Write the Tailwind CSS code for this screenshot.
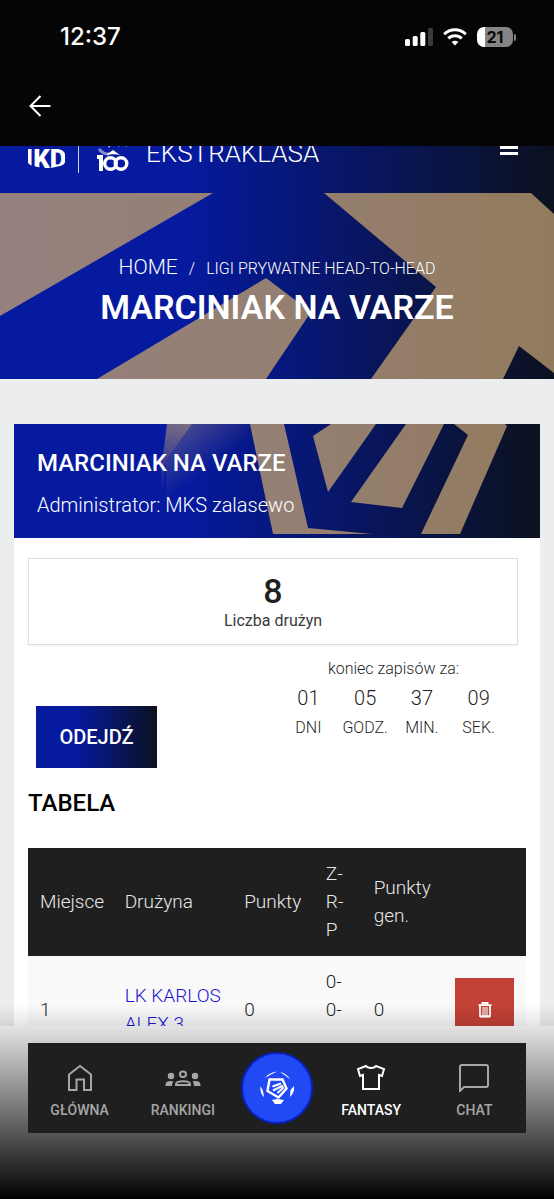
<!DOCTYPE html>
<html lang="pl">
<head>
<meta charset="utf-8">
<meta name="viewport" content="width=device-width, initial-scale=1">
<title>Marciniak na Varze</title>
<script src="https://cdn.jsdelivr.net/npm/@tailwindcss/browser@4"></script>
</head>
<body class="flex h-screen flex-col overflow-hidden bg-[#ecedef] font-['Roboto',sans-serif] font-light text-[#1f1f1f]">

<header class="shrink-0 bg-[#050505] text-white">
  <div class="flex h-[74px] items-center justify-between pr-[38px] pl-[60px]">
    <time class="font-['Inter',sans-serif] text-[24px] font-medium">12:37</time>
    <div class="flex items-center gap-[10px]">
      <svg class="h-[18px] w-[28px]" viewBox="0 0 28 18" fill="#fff" aria-hidden="true"><rect x="0" y="11" width="5" height="7" rx="1.5"/><rect x="7.700" y="8" width="5" height="10" rx="1.500"/><rect x="15.300" y="4" width="5" height="14" rx="1.500"/><rect x="23" y="0" width="5" height="18" rx="1.500" fill="#3a3a3a"/></svg>
      <svg class="h-[18px] w-[24px]" viewBox="0 0 24 18" fill="none" stroke="#fff" stroke-width="3" aria-hidden="true"><path d="M1.200 6.200C7.200.2 16.800.2 22.800 6.200"/><path d="M5.300 10.400c3.800-3.700 9.600-3.700 13.400 0"/><path d="M8.600 14c2-1.800 4.800-1.800 6.800 0L12 17.600z" fill="#fff" stroke="none"/></svg>
      <div class="flex items-center">
        <div class="flex h-[20px] w-[36px] items-center justify-center rounded-[7px] bg-linear-to-r from-white from-23% to-[#858585] to-23% font-['Inter',sans-serif] text-[16px] font-bold text-[#0a0a0a]">21</div>
        <div class="ml-px h-[7px] w-[2px] rounded-r-full bg-[#858585]"></div>
      </div>
    </div>
  </div>
  <div class="flex h-[72px] items-start px-[28px] pt-[20px]">
    <button type="button" aria-label="Wstecz"><svg class="size-[24px]" viewBox="0 0 24 24" fill="none" stroke="#fff" stroke-width="2"><path d="M22.500 12H2.500M12.500 2 2.500 12l10 10"/></svg></button>
  </div>
</header>

<main class="min-h-0 flex-1 overflow-hidden">
  <div class="-mt-[37px] flex h-[84px] items-center bg-linear-to-r/srgb from-[#051a9f] from-33% to-[#0b111e] pr-[36px] pl-[28px] text-white">
    <svg class="h-[40px] w-[37px]" viewBox="0 0 37 40" role="img" aria-label="IKD"><defs><clipPath id="shield"><path d="M0 0h37v31c0 4-7 4-18 7C7 35 0 35 0 31z"/></clipPath></defs><text x="18" y="37" text-anchor="middle" font-family="Roboto" font-weight="900" font-size="26" fill="#fff" clip-path="url(#shield)">IKD</text></svg>
    <div class="ml-[13px] h-[44px] w-px bg-white/80"></div>
    <svg class="ml-[16px] h-[44px] w-[36px]" viewBox="0 0 36 44" role="img" aria-label="100">
      <path d="M2 13h4l3 4zM12 13h5l-3 6zM20 13h5l-1 5zM30 13h5l-4 5z" fill="#fff"/><path d="M4 20c4 5 7 5 10 5" fill="none" stroke="#fff" stroke-opacity=".5" stroke-width="3"/><path d="M18 21l7 5c-4-1-9-1-14 0z" fill="#fff"/>
      <path d="M2 28h4v14" fill="none" stroke="#fff" stroke-width="4"/><circle cx="15.500" cy="34.500" r="5.800" fill="none" stroke="#fff" stroke-width="3.400"/><circle cx="26" cy="34.500" r="5.800" fill="none" stroke="#fff" stroke-width="3.400"/>
    </svg>
    <a href="#" class="ml-[15px] pt-[4px] text-[26px] leading-[30px]">EKSTRAKLASA</a>
    <button type="button" class="mb-[6px] ml-auto" aria-label="Menu"><svg class="h-[16px] w-[18px]" viewBox="0 0 18 16" fill="#fff"><rect y="0" width="18" height="3"/><rect y="6" width="18" height="3"/><rect y="12" width="18" height="3"/></svg></button>
  </div>

  <section class="relative flex h-[186px] flex-col items-center overflow-hidden bg-linear-to-r/srgb from-[#051a9f] from-33% to-[#0b111e] pt-[58px] text-white">
    <svg class="absolute inset-0 size-full" viewBox="0 0 554 186" preserveAspectRatio="xMidYMid slice" aria-hidden="true">
      <defs><linearGradient id="tan" gradientUnits="userSpaceOnUse" x1="0" x2="554" y1="0" y2="0"><stop stop-color="#95807e"/><stop offset=".4" stop-color="#958076"/><stop offset="1" stop-color="#927b5d"/></linearGradient></defs>
      <g fill="url(#tan)"><path d="M0 0h213L0 123z"/><path d="M97 186 266 85l45 34-45 67z"/><path d="M324 0h207l23 21v159l-35-27-16 33H371l65-92z"/></g>
    </svg>
    <nav class="relative flex items-baseline" aria-label="Okruszki">
      <a href="#" class="text-[21px] leading-[32px]">HOME</a>
      <span class="mx-[11px] text-[16px]">/</span>
      <span class="text-[16px]">LIGI PRYWATNE HEAD-TO-HEAD</span>
    </nav>
    <h1 class="relative mt-[2px] text-[34px] leading-[44px] font-semibold">MARCINIAK NA VARZE</h1>
  </section>

  <article class="mx-[14px] mt-[45px] bg-white">
    <div class="relative h-[114px] overflow-hidden bg-linear-to-r/srgb from-[#051a9f] from-33% to-[#0b111e] px-[23px] pt-[24px] text-white">
      <svg class="absolute inset-0 size-full" viewBox="0 0 526 114" preserveAspectRatio="xMidYMid slice" aria-hidden="true">
        <defs>
          <linearGradient id="tan2" gradientUnits="userSpaceOnUse" x1="230" x2="500" y1="0" y2="0"><stop stop-color="#958078"/><stop offset="1" stop-color="#927b5f"/></linearGradient>
          <linearGradient id="fade1" gradientUnits="userSpaceOnUse" x1="168" y1="0" x2="150" y2="70"><stop stop-color="#95807c" stop-opacity=".8"/><stop offset="1" stop-color="#95807c" stop-opacity="0"/></linearGradient>
          <linearGradient id="fade2" gradientUnits="userSpaceOnUse" x1="182" y1="0" x2="208" y2="34"><stop stop-color="#95807c" stop-opacity=".4"/><stop offset="1" stop-color="#95807c" stop-opacity="0"/></linearGradient>
        </defs>
        <path d="M153 0h25l-26 36-4 34-1-24z" fill="url(#fade1)"/><path d="M178 0h58l8 45-92 30V36z" fill="url(#fade2)"/>
        <g fill="url(#tan2)"><path d="M236 0h34l24 104 64 6h-99z"/><path d="M317 0h45l-48 68-15-56z"/><path d="M392 0h38l-42 84-51-6z"/><path d="M440 0h51l2 2-47 108h-39l47-99z"/></g>
      </svg>
      <h2 class="relative text-[24px] leading-[30px] font-medium">MARCINIAK NA VARZE</h2>
      <p class="relative mt-[13px] text-[20px] leading-[28px]">Administrator: MKS zalasewo</p>
    </div>

    <div class="px-[14px] pt-[20px]">
      <div class="mr-[8px] flex h-[87px] flex-col items-center border border-[#dedede] pt-[14px] shadow-xs">
        <strong class="text-[34px] leading-[36px] font-medium">8</strong>
        <span class="text-[16px] leading-[24px] font-normal text-[#3a3a3a]">Liczba drużyn</span>
      </div>
      <div class="flex justify-between pt-[12px] pr-[19px] pl-[8px]">
        <button type="button" class="mt-[49px] h-[62px] w-[121px] bg-linear-to-r/srgb from-[#051a9f] from-33% to-[#0b111e] text-[20px] font-medium text-white">ODEJDŹ</button>
        <div class="w-[227px] text-center">
          <p class="text-[16px] leading-[24px]">koniec zapisów za:</p>
          <dl class="mt-[2px] grid grid-cols-4">
            <div class="flex flex-col-reverse"><dt class="text-[16px] leading-[30px]">DNI</dt><dd class="text-[20px] leading-[30px]">01</dd></div>
            <div class="flex flex-col-reverse"><dt class="text-[16px] leading-[30px]">GODZ.</dt><dd class="text-[20px] leading-[30px]">05</dd></div>
            <div class="flex flex-col-reverse"><dt class="text-[16px] leading-[30px]">MIN.</dt><dd class="text-[20px] leading-[30px]">37</dd></div>
            <div class="flex flex-col-reverse"><dt class="text-[16px] leading-[30px]">SEK.</dt><dd class="text-[20px] leading-[30px]">09</dd></div>
          </dl>
        </div>
      </div>
      <h3 class="mt-[20px] text-[24px] leading-[30px] font-medium text-black">TABELA</h3>
      <table class="mt-[30px] w-full table-fixed text-left text-[19px] leading-[28px]">
        <colgroup><col class="w-[17%]"><col class="w-[24%]"><col class="w-[17%]"><col class="w-[9%]"><col class="w-[17%]"><col class="w-[16%]"></colgroup>
        <thead class="bg-[#1f1f1f] text-[#e8e8e8]">
          <tr>
            <th class="py-[12px] pl-[12px] font-light">Miejsce</th><th class="py-[12px] pl-[12px] font-light">Drużyna</th><th class="py-[12px] pl-[12px] font-light">Punkty</th><th class="py-[12px] pl-[9px] font-light">Z-<br>R-<br>P</th><th class="py-[12px] pl-[12px] font-light">Punkty<br>gen.</th><td></td>
          </tr>
        </thead>
        <tbody class="bg-[#f9f9f9]">
          <tr>
            <td class="py-[12px] pl-[12px]">1</td><td class="py-[12px] pl-[12px]"><a href="#" class="text-[#1d12d8]">LK KARLOS<br>ALEX 3</a></td><td class="py-[12px] pl-[12px]">0</td><td class="py-[12px] pl-[9px]">0-<br>0-<br>0</td><td class="py-[12px] pl-[12px]">0</td>
            <td class="pr-[12px] text-right"><button type="button" aria-label="Usuń" class="inline-flex h-[64px] w-[59px] items-center justify-center bg-[#c24036] align-middle"><svg class="h-[16px] w-[14px]" viewBox="0 0 14 16" fill="none" stroke="#fff"><path d="M.5 3.200h13M4.500 2.500V1h5v1.500" stroke-width="1.800"/><path d="M2 4v10.200h10V4" stroke-width="1.800"/><path d="M5 5v8M7 5v8M9 5v8" stroke-width="1.100"/><path d="M2 14.500h10" stroke-width="2.200"/></svg></button></td>
          </tr>
        </tbody>
      </table>
    </div>
  </article>
</main>

<footer class="relative shrink-0 bg-white px-[28px] pt-[17px] pb-[66px]">
  <div class="absolute inset-x-0 -top-[21px] bottom-0 bg-linear-to-b from-transparent to-black"></div>
  <nav class="relative grid h-[90px] grid-cols-[1fr_1fr_85px_1fr_1fr] items-center bg-[#1f1f1f] text-center text-[14px] leading-[20px] font-medium text-[#a6a6a6]" aria-label="Główna nawigacja">
    <a href="#" class="flex flex-col items-center gap-[8px] pt-[8px]">
      <svg class="h-[28px] w-[26px]" viewBox="0 0 26 28" fill="none" stroke="currentColor" stroke-width="2"><path d="M2 10.500 13 2l11 8.500V26h-7V15.500H9.500V26H2z"/></svg>
      GŁÓWNA</a>
    <a href="#" class="flex flex-col items-center gap-[8px] pt-[8px]">
      <svg class="h-[28px] w-[36px]" viewBox="0 0 36 28" fill="currentColor"><circle cx="6" cy="12" r="3.200"/><path d="M.5 22v-1.500c0-2.500 3-3.700 6.500-3.300 1 .1 1.500.3 1.500.3C7.500 18.500 7 20 7 22z"/><circle cx="30" cy="12" r="3.200"/><path d="M35.500 22v-1.500c0-2.500-3-3.700-6.500-3.300-1 .1-1.500.3-1.500.3 1 1 1.500 2.500 1.500 4.500z"/><g fill="none" stroke="currentColor" stroke-width="2"><rect x="15" y="7.500" width="6" height="5.500" rx="2.800"/><path d="M11 21v-.8c0-2 3.500-3 7-3s7 1 7 3v.8z"/></g></svg>
      RANKINGI</a>
    <a href="#" aria-label="Ekstraklasa" class="mx-auto flex size-[72px] items-center justify-center rounded-full border-2 border-[#0a20c4] bg-[#2149f4]">
      <svg class="size-[38px]" viewBox="0 0 38 38" fill="none" stroke="#fff"><path d="M11.500 10.500h13l4 9-8 9-11-6.500z" stroke-width="2.400"/><path d="m14.500 17.500 8.500-3M15 21.500l9-4.500 1 2-5.500 5" stroke-width="2"/><path d="M7 9c3-4 7-6 12-6.500L12 6zM22 3c5 1 8 3.500 10 7.500L28 7zM2.500 17C2 22 3.500 26 6 28l-1-6zM36 17c.5 5-1 8-4 11l.5-7zM14 31l5-1 7 1-3 4h-6z" fill="#fff" stroke="none"/></svg>
    </a>
    <a href="#" class="flex flex-col items-center gap-[8px] pt-[8px] text-white" aria-current="page">
      <svg class="h-[28px] w-[30px]" viewBox="0 0 30 28" fill="none" stroke="currentColor" stroke-width="2"><path d="M10 2 2 5l2 7 3-1v14h16V11l3 1 2-7-8-3c-1.500 2.500-8.500 2.500-10 0z"/></svg>
      FANTASY</a>
    <a href="#" class="flex flex-col items-center gap-[8px] pt-[8px]">
      <svg class="h-[28px] w-[30px]" viewBox="0 0 30 28" fill="none" stroke="currentColor" stroke-width="2"><path d="M1 26V2q0-2 2-2h24q2 0 2 2v18q0 2-2 2H5z" transform="translate(0 1)"/></svg>
      CHAT</a>
  </nav>
</footer>
</body>
</html>
